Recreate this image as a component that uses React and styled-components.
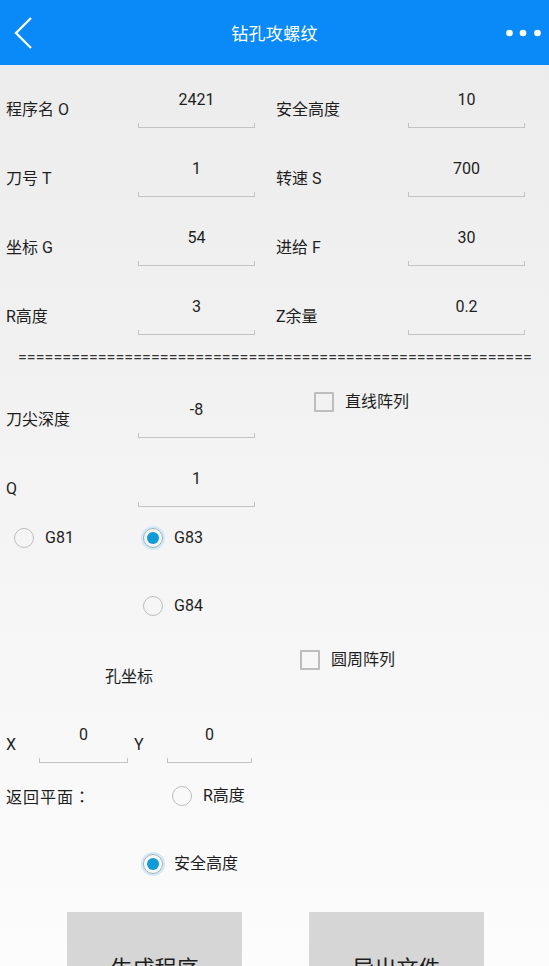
import React from "react";
import styled, { createGlobalStyle } from "styled-components";

const GlobalStyle = createGlobalStyle`
  html, body {
    margin: 0;
    padding: 0;
  }
  body {
    width: 549px;
    height: 966px;
    overflow: hidden;
    font-family: Roboto, "Noto Sans CJK SC", sans-serif;
    color: #1e1e1e;
  }
`;

const Screen = styled.div`
  height: 966px;
  display: flex;
  flex-direction: column;
  background: linear-gradient(#ebebeb, #fcfcfc);
  overflow: hidden;
`;

const TopBar = styled.header`
  height: 65px;
  flex: none;
  background: #0a8af8;
  display: grid;
  grid-template-columns: 1fr auto 1fr;
  align-items: center;
`;

const BackButton = styled.div`
  padding-left: 14px;
  display: flex;
  align-items: center;
`;

const Title = styled.h1`
  margin: 0;
  font-size: 17px;
  font-weight: normal;
  color: #fff;
  letter-spacing: 0.3px;
`;

const MoreButton = styled.div`
  justify-self: end;
  display: flex;
  align-items: center;
  padding-right: 7px;
`;

const Content = styled.main`
  padding: 11px 0 0 6px;
  font-size: 16px;
`;

const FieldRow = styled.div`
  display: flex;
  align-items: flex-start;
  height: ${(p) => p.$height || 69}px;
`;

const Cell = styled.div`
  display: flex;
  width: 270px;
  flex: none;
`;

const Label = styled.div`
  width: ${(p) => p.$width || 132}px;
  margin-left: ${(p) => p.$offset || 0}px;
  margin-top: 24px;
  line-height: 20px;
  flex: none;
`;

const Field = styled.div`
  width: ${(p) => p.$width || 117}px;
  display: flex;
  flex-direction: column;
  align-items: center;
  flex: none;
`;

const Value = styled.div`
  margin-top: 14px;
  line-height: 20px;
`;

const Underline = styled.div`
  align-self: stretch;
  height: 4px;
  margin-top: 13px;
  border: 1.5px solid #c3c3c3;
  border-top: none;
`;

const Separator = styled.div`
  margin: -4px 0 18px 12px;
  line-height: 20px;
  letter-spacing: 0.08px;
  color: #333;
  white-space: nowrap;
`;

const CheckItem = styled.label`
  display: flex;
  align-items: center;
  gap: 11px;
  margin-left: ${(p) => p.$offset || 0}px;
  margin-top: ${(p) => p.$top || 0}px;
  line-height: 20px;
`;

const Box = styled.span`
  width: 16px;
  height: 16px;
  border: 2px solid #bdbdbd;
  border-radius: 1px;
  flex: none;
`;

const RadioLine = styled.div`
  display: flex;
  align-items: center;
  height: 20px;
  margin-top: ${(p) => p.$top || 0}px;
  padding-left: ${(p) => p.$indent || 0}px;
`;

const RadioItem = styled.label`
  display: flex;
  align-items: center;
  gap: 11px;
  width: ${(p) => (p.$width ? `${p.$width}px` : "auto")};
  line-height: 20px;
`;

const RadioDot = styled.span`
  width: 18px;
  height: 18px;
  border-radius: 50%;
  border: 1.5px solid ${(p) => (p.$checked ? "#a3b0b6" : "#bdbdbd")};
  box-shadow: ${(p) => (p.$checked ? "0 0 0 2px #d0e9f6" : "none")};
  display: flex;
  align-items: center;
  justify-content: center;
  flex: none;
  &::after {
    content: "";
    width: 12px;
    height: 12px;
    border-radius: 50%;
    background: ${(p) => (p.$checked ? "#0f9ad8" : "transparent")};
  }
`;

const ArrayRow = styled.div`
  display: flex;
  align-items: flex-start;
  margin-top: 34px;
  height: 61px;
`;

const Caption = styled.div`
  width: 294px;
  flex: none;
  padding-left: 99px;
  box-sizing: border-box;
  margin-top: 17px;
  line-height: 20px;
`;

const ReturnRow = styled.div`
  display: flex;
  align-items: center;
  height: 20px;
  margin-top: 22px;
`;

const ReturnLabel = styled.div`
  width: 166px;
  flex: none;
  font-family: Roboto, "Noto Sans CJK JP", sans-serif;
  letter-spacing: 1px;
`;

const Buttons = styled.div`
  display: flex;
  gap: 67px;
  padding-left: 61px;
  margin-top: 38px;
`;

const ActionButton = styled.button`
  width: 175px;
  height: 108px;
  border: none;
  border-radius: 1px;
  background: #d6d6d6;
  font-family: inherit;
  font-size: 22px;
  color: #1e1e1e;
  padding: 0;
`;

function Input({ value, width }) {
  return (
    <Field $width={width}>
      <Value>{value}</Value>
      <Underline />
    </Field>
  );
}

function Radio({ label, checked, width }) {
  return (
    <RadioItem $width={width}>
      <RadioDot $checked={checked} />
      {label}
    </RadioItem>
  );
}

const pairs = [
  ["程序名 O", "2421", "安全高度", "10"],
  ["刀号 T", "1", "转速 S", "700"],
  ["坐标 G", "54", "进给 F", "30"],
  ["R高度", "3", "Z余量", "0.2"],
];

export default function App() {
  return (
    <Screen>
      <GlobalStyle />
      <TopBar>
        <BackButton>
          <svg width="20" height="34" viewBox="0 0 20 34">
            <path d="M17 2 L2 17 L17 32" fill="none" stroke="#fff" strokeWidth="2.3" />
          </svg>
        </BackButton>
        <Title>钻孔攻螺纹</Title>
        <MoreButton>
          <svg width="36" height="10" viewBox="0 0 36 10">
            <circle cx="3.5" cy="5" r="3.3" fill="#fff" />
            <circle cx="17" cy="5" r="3.3" fill="#fff" />
            <circle cx="31.5" cy="5" r="3.3" fill="#fff" />
          </svg>
        </MoreButton>
      </TopBar>

      <Content>
        {pairs.map(([l1, v1, l2, v2]) => (
          <FieldRow key={l1}>
            <Cell>
              <Label>{l1}</Label>
              <Input value={v1} />
            </Cell>
            <Cell>
              <Label>{l2}</Label>
              <Input value={v2} />
            </Cell>
          </FieldRow>
        ))}

        <Separator>{"=".repeat(58)}</Separator>

        <FieldRow>
          <Cell>
            <Label>刀尖深度</Label>
            <Input value="-8" />
          </Cell>
          <CheckItem $offset={38} $top={6}>
            <Box />
            直线阵列
          </CheckItem>
        </FieldRow>
        <FieldRow>
          <Label>Q</Label>
          <Input value="1" />
        </FieldRow>

        <RadioLine $top={4} $indent={8}>
          <Radio label="G81" width={129} />
          <Radio label="G83" checked />
        </RadioLine>
        <RadioLine $top={48} $indent={137}>
          <Radio label="G84" />
        </RadioLine>

        <ArrayRow>
          <Caption>孔坐标</Caption>
          <CheckItem>
            <Box />
            圆周阵列
          </CheckItem>
        </ArrayRow>

        <FieldRow $height={53}>
          <Label $width={33}>X</Label>
          <Input value="0" width={89} />
          <Label $width={33} $offset={6}>Y</Label>
          <Input value="0" width={85} />
        </FieldRow>

        <ReturnRow>
          <ReturnLabel>返回平面：</ReturnLabel>
          <Radio label="R高度" />
        </ReturnRow>
        <RadioLine $top={48} $indent={137}>
          <Radio label="安全高度" checked />
        </RadioLine>

        <Buttons>
          <ActionButton>生成程序</ActionButton>
          <ActionButton>导出文件</ActionButton>
        </Buttons>
      </Content>
    </Screen>
  );
}
